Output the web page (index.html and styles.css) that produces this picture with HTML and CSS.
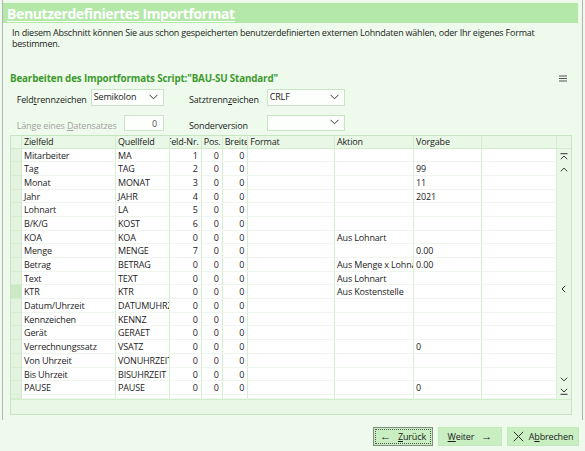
FILE: index.html
```html
<!DOCTYPE html>
<html lang="de">
<head>
<meta charset="utf-8">
<title>Benutzerdefiniertes Importformat</title>
<link rel="stylesheet" href="styles.css">
</head>
<body>
<div class="frame">
  <div class="titlebar"><span class="title">Benutzerdefiniertes Importformat</span></div>
  <p class="desc">In diesem Abschnitt können Sie aus schon gespeicherten benutzerdefinierten externen Lohndaten wählen, oder Ihr eigenes Format<br>bestimmen.</p>
  <div class="section-head">
    <span class="heading">Bearbeiten des Importformats Script:"BAU-SU Standard"</span>
    <svg class="menu" width="8" height="7" viewBox="0 0 8 7"><path d="M0 1h8M0 3.5h8M0 6h8" stroke="#555" stroke-width="1"/></svg>
  </div>
  <div class="form">
    <span class="lbl l-a">Feld<u>t</u>rennzeichen</span>
    <div class="select sel-a"><span>Semikolon</span><svg width="9" height="6" viewBox="0 0 9 6"><path d="M0.5 0.8L4.5 4.8L8.5 0.8" fill="none" stroke="#333" stroke-width="1"/></svg></div>
    <span class="lbl l-b">Satztrenn<u>z</u>eichen</span>
    <div class="select sel-b"><span>CRLF</span><svg width="9" height="6" viewBox="0 0 9 6"><path d="M0.5 0.8L4.5 4.8L8.5 0.8" fill="none" stroke="#333" stroke-width="1"/></svg></div>
    <span class="lbl l-c disabled">Länge eines <u>D</u>atensatzes</span>
    <div class="numinput">0</div>
    <span class="lbl l-d">Sonderversion</span>
    <div class="select sel-d"><span></span><svg width="9" height="6" viewBox="0 0 9 6"><path d="M0.5 0.8L4.5 4.8L8.5 0.8" fill="none" stroke="#333" stroke-width="1"/></svg></div>
  </div>
  <div class="grid">
    <div class="ghead">
      <div class="hc"></div>
      <div class="hc">Zielfeld</div>
      <div class="hc">Quellfeld</div>
      <div class="hc right">Feld-Nr.</div>
      <div class="hc">Pos.</div>
      <div class="hc">Breite</div>
      <div class="hc">Format</div>
      <div class="hc">Aktion</div>
      <div class="hc">Vorgabe</div>
      <div class="hc"></div>
      <div class="hc last"></div>
    </div>
    <div class="gbody">
      <div class="rows">
        <div class="row"><div class="sel"></div><div class="c">Mitarbeiter</div><div class="c">MA</div><div class="c n">1</div><div class="c n">0</div><div class="c n">0</div><div class="c"></div><div class="c"></div><div class="c"></div><div class="c"></div></div>
        <div class="row"><div class="sel"></div><div class="c">Tag</div><div class="c">TAG</div><div class="c n">2</div><div class="c n">0</div><div class="c n">0</div><div class="c"></div><div class="c"></div><div class="c">99</div><div class="c"></div></div>
        <div class="row"><div class="sel"></div><div class="c">Monat</div><div class="c">MONAT</div><div class="c n">3</div><div class="c n">0</div><div class="c n">0</div><div class="c"></div><div class="c"></div><div class="c">11</div><div class="c"></div></div>
        <div class="row"><div class="sel"></div><div class="c">Jahr</div><div class="c">JAHR</div><div class="c n">4</div><div class="c n">0</div><div class="c n">0</div><div class="c"></div><div class="c"></div><div class="c">2021</div><div class="c"></div></div>
        <div class="row"><div class="sel"></div><div class="c">Lohnart</div><div class="c">LA</div><div class="c n">5</div><div class="c n">0</div><div class="c n">0</div><div class="c"></div><div class="c"></div><div class="c"></div><div class="c"></div></div>
        <div class="row"><div class="sel"></div><div class="c">B/K/G</div><div class="c">KOST</div><div class="c n">6</div><div class="c n">0</div><div class="c n">0</div><div class="c"></div><div class="c"></div><div class="c"></div><div class="c"></div></div>
        <div class="row"><div class="sel"></div><div class="c">KOA</div><div class="c">KOA</div><div class="c n">0</div><div class="c n">0</div><div class="c n">0</div><div class="c"></div><div class="c">Aus Lohnart</div><div class="c"></div><div class="c"></div></div>
        <div class="row"><div class="sel"></div><div class="c">Menge</div><div class="c">MENGE</div><div class="c n">7</div><div class="c n">0</div><div class="c n">0</div><div class="c"></div><div class="c"></div><div class="c">0.00</div><div class="c"></div></div>
        <div class="row"><div class="sel"></div><div class="c">Betrag</div><div class="c">BETRAG</div><div class="c n">0</div><div class="c n">0</div><div class="c n">0</div><div class="c"></div><div class="c">Aus Menge x Lohnart</div><div class="c">0.00</div><div class="c"></div></div>
        <div class="row"><div class="sel"></div><div class="c">Text</div><div class="c">TEXT</div><div class="c n">0</div><div class="c n">0</div><div class="c n">0</div><div class="c"></div><div class="c">Aus Lohnart</div><div class="c"></div><div class="c"></div></div>
        <div class="row"><div class="sel active"></div><div class="c">KTR</div><div class="c">KTR</div><div class="c n">0</div><div class="c n">0</div><div class="c n">0</div><div class="c"></div><div class="c">Aus Kostenstelle</div><div class="c"></div><div class="c"></div></div>
        <div class="row"><div class="sel"></div><div class="c">Datum/Uhrzeit</div><div class="c">DATUMUHRZEIT</div><div class="c n">0</div><div class="c n">0</div><div class="c n">0</div><div class="c"></div><div class="c"></div><div class="c"></div><div class="c"></div></div>
        <div class="row"><div class="sel"></div><div class="c">Kennzeichen</div><div class="c">KENNZ</div><div class="c n">0</div><div class="c n">0</div><div class="c n">0</div><div class="c"></div><div class="c"></div><div class="c"></div><div class="c"></div></div>
        <div class="row"><div class="sel"></div><div class="c">Gerät</div><div class="c">GERAET</div><div class="c n">0</div><div class="c n">0</div><div class="c n">0</div><div class="c"></div><div class="c"></div><div class="c"></div><div class="c"></div></div>
        <div class="row"><div class="sel"></div><div class="c">Verrechnungssatz</div><div class="c">VSATZ</div><div class="c n">0</div><div class="c n">0</div><div class="c n">0</div><div class="c"></div><div class="c"></div><div class="c">0</div><div class="c"></div></div>
        <div class="row"><div class="sel"></div><div class="c">Von Uhrzeit</div><div class="c">VONUHRZEIT</div><div class="c n">0</div><div class="c n">0</div><div class="c n">0</div><div class="c"></div><div class="c"></div><div class="c"></div><div class="c"></div></div>
        <div class="row"><div class="sel"></div><div class="c">Bis Uhrzeit</div><div class="c">BISUHRZEIT</div><div class="c n">0</div><div class="c n">0</div><div class="c n">0</div><div class="c"></div><div class="c"></div><div class="c"></div><div class="c"></div></div>
        <div class="row"><div class="sel"></div><div class="c">PAUSE</div><div class="c">PAUSE</div><div class="c n">0</div><div class="c n">0</div><div class="c n">0</div><div class="c"></div><div class="c"></div><div class="c">0</div><div class="c"></div></div>
        <div class="row partial"><div class="sel"></div><div class="c"></div><div class="c"></div><div class="c"></div><div class="c"></div><div class="c"></div><div class="c"></div><div class="c"></div><div class="c"></div><div class="c"></div></div>
      </div>
      <div class="vscroll">
        <svg class="ico i-top" width="8" height="7" viewBox="0 0 8 7"><path d="M0.5 0.7h7M0.8 6.2L4 3L7.2 6.2" fill="none" stroke="#333" stroke-width="1"/></svg>
        <svg class="ico i-up" width="8" height="5" viewBox="0 0 8 5"><path d="M0.8 4.3L4 1.1L7.2 4.3" fill="none" stroke="#333" stroke-width="1"/></svg>
        <svg class="ico i-left" width="5" height="8" viewBox="0 0 5 8"><path d="M4.2 0.8L1 4L4.2 7.2" fill="none" stroke="#333" stroke-width="1"/></svg>
        <svg class="ico i-down" width="8" height="5" viewBox="0 0 8 5"><path d="M0.8 0.7L4 3.9L7.2 0.7" fill="none" stroke="#333" stroke-width="1"/></svg>
        <svg class="ico i-bottom" width="8" height="7" viewBox="0 0 8 7"><path d="M0.8 0.8L4 4L7.2 0.8M0.5 6.3h7" fill="none" stroke="#333" stroke-width="1"/></svg>
      </div>
    </div>
    <div class="gfoot"></div>
  </div>
</div>
<div class="buttons">
  <button class="btn focus"><span class="bi">&#8592;</span><span><u>Z</u>urück</span></button>
  <button class="btn"><span><u>W</u>eiter</span><span class="bi">&#8594;</span></button>
  <button class="btn"><svg class="bx" width="11" height="11" viewBox="0 0 11 11"><path d="M0.8 0.8L10.2 10.2M10.2 0.8L0.8 10.2" stroke="#333" stroke-width="1"/></svg><span>A<u>b</u>brechen</span></button>
</div>
</body>
</html>
```
FILE: styles.css
```css
* { box-sizing: border-box; }
body {
  margin: 0;
  width: 585px;
  height: 451px;
  overflow: hidden;
  background: #eefaec;
  font-family: "Open Sans", "Noto Sans", sans-serif;
  font-size: 9px;
  letter-spacing: -0.15px;
  color: #1b1b1b;
}
.frame {
  margin-left: 2px;
  width: 581px;
  height: 420px;
  border-left: 1px solid #b4b4b4;
  border-right: 1px solid #b4b4b4;
  padding-top: 3px;
}
.titlebar {
  height: 20px;
  margin-right: 4px;
  background: #b4e8a9;
  display: flex;
  align-items: center;
  padding-left: 4px;
}
.title {
  color: #fff;
  font-weight: 700;
  font-size: 14px;
  letter-spacing: -0.4px;
  text-decoration: underline;
  text-decoration-thickness: 1px;
  text-underline-offset: 2px;
}
.desc {
  margin: 4px 0 0 9px;
  line-height: 11px;
  letter-spacing: -0.22px;
}
.section-head {
  display: flex;
  align-items: center;
  justify-content: space-between;
  margin: 23px 15px 0 7px;
  height: 12px;
}
.heading {
  color: #3d9a2f;
  font-weight: 700;
  font-size: 9.8px;
  letter-spacing: -0.15px;
}
.form {
  display: grid;
  grid-template-columns: 74px 33.3px 40px 25px 77.7px 78.3px;
  grid-template-rows: 17px 16px;
  row-gap: 9px;
  margin: 5px 0 0 13.7px;
  align-items: center;
}
.lbl { padding-top: 4px; white-space: nowrap; }
.lbl u { text-underline-offset: 1px; }
.l-a { grid-column: 1; grid-row: 1; }
.sel-a { grid-column: 2 / 4; grid-row: 1; }
.l-b { grid-column: 5; grid-row: 1; }
.sel-b { grid-column: 6; grid-row: 1; }
.l-c { grid-column: 1 / 3; grid-row: 2; }
.numinput { grid-column: 3; grid-row: 2; }
.l-d { grid-column: 5; grid-row: 2; }
.sel-d { grid-column: 6; grid-row: 2; }
.disabled { color: #a3a3a3; }
.select {
  height: 100%;
  border: 1px solid #c9e6c4;
  background: #fdfffd;
  display: flex;
  align-items: center;
  justify-content: space-between;
  padding: 0 5px 2px 2px;
}
.numinput {
  height: 100%;
  border: 1px solid #cfe3cc;
  background: #fdfffd;
  text-align: right;
  padding: 1px 6px 0 0;
  color: #555;
}
.grid {
  margin: 4px 0 0 7px;
  width: 562px;
  border: 1px solid #c8e5c3;
  background: #e9f7e6;
}
.ghead {
  display: grid;
  grid-template-columns: 11px 94px 54px 31.7px 21px 25.6px 86.7px 79px 67.7px 75px 14.3px;
  height: 12.5px;
  border-bottom: 1px solid #d3ecce;
}
.hc {
  border-right: 1px solid #d3ecce;
  overflow: hidden;
  white-space: nowrap;
  padding-left: 2px;
  line-height: 12px;
}
.hc.right { display: flex; justify-content: flex-end; padding: 0 2px 0 0; }
.hc.last { border-right: 0; }
.gbody { display: flex; }
.rows { width: 545.7px; }
.row {
  display: grid;
  grid-template-columns: 11px 94px 54px 31.7px 21px 25.6px 86.7px 79px 67.7px 75px;
  height: 13.7px;
}
.row.partial { height: 4px; }
.sel {
  background: #e3f3df;
  border-right: 1px solid #cfe9ca;
  border-bottom: 1px solid #d6edd2;
}
.sel.active { background: #cbe9c5; }
.c {
  background: #fff;
  border-right: 1px solid #d6efd1;
  border-bottom: 1px solid #eef6ed;
  overflow: hidden;
  white-space: nowrap;
  padding-left: 2px;
  line-height: 13px;
}
.c.n { text-align: right; padding: 0 3px 0 0; }
.vscroll {
  width: 14.3px;
  display: flex;
  flex-direction: column;
  align-items: center;
  background: #e9f7e6;
}
.ico { display: block; }
.i-top { margin-top: 4px; }
.i-up { margin-top: 7px; }
.i-left { margin-top: 113px; }
.i-down { margin-top: 84px; }
.i-bottom { margin-top: 6px; }
.gfoot { height: 15px; border-top: 1px solid #d3ecce; }
.buttons {
  display: flex;
  justify-content: flex-end;
  gap: 4.5px;
  margin: 6.7px 5.7px 0 0;
}
.btn {
  height: 19.3px;
  border: 1px solid #c2e8bb;
  background: #c8eec1;
  font-family: inherit;
  font-size: 9px;
  letter-spacing: -0.15px;
  color: #1b1b1b;
  display: flex;
  align-items: center;
  justify-content: center;
  gap: 7px;
  padding: 0;
}
.btn:nth-child(1) { width: 60px; }
.btn:nth-child(2) { width: 64.7px; }
.btn:nth-child(3) { width: 72.6px; gap: 5px; }
.btn.focus {
  border: 1px solid #7e8f7c;
  outline: 1px dotted #555;
  outline-offset: -3px;
}
.bi { font-size: 11px; line-height: 10px; }
.btn u { text-underline-offset: 1px; }
```
